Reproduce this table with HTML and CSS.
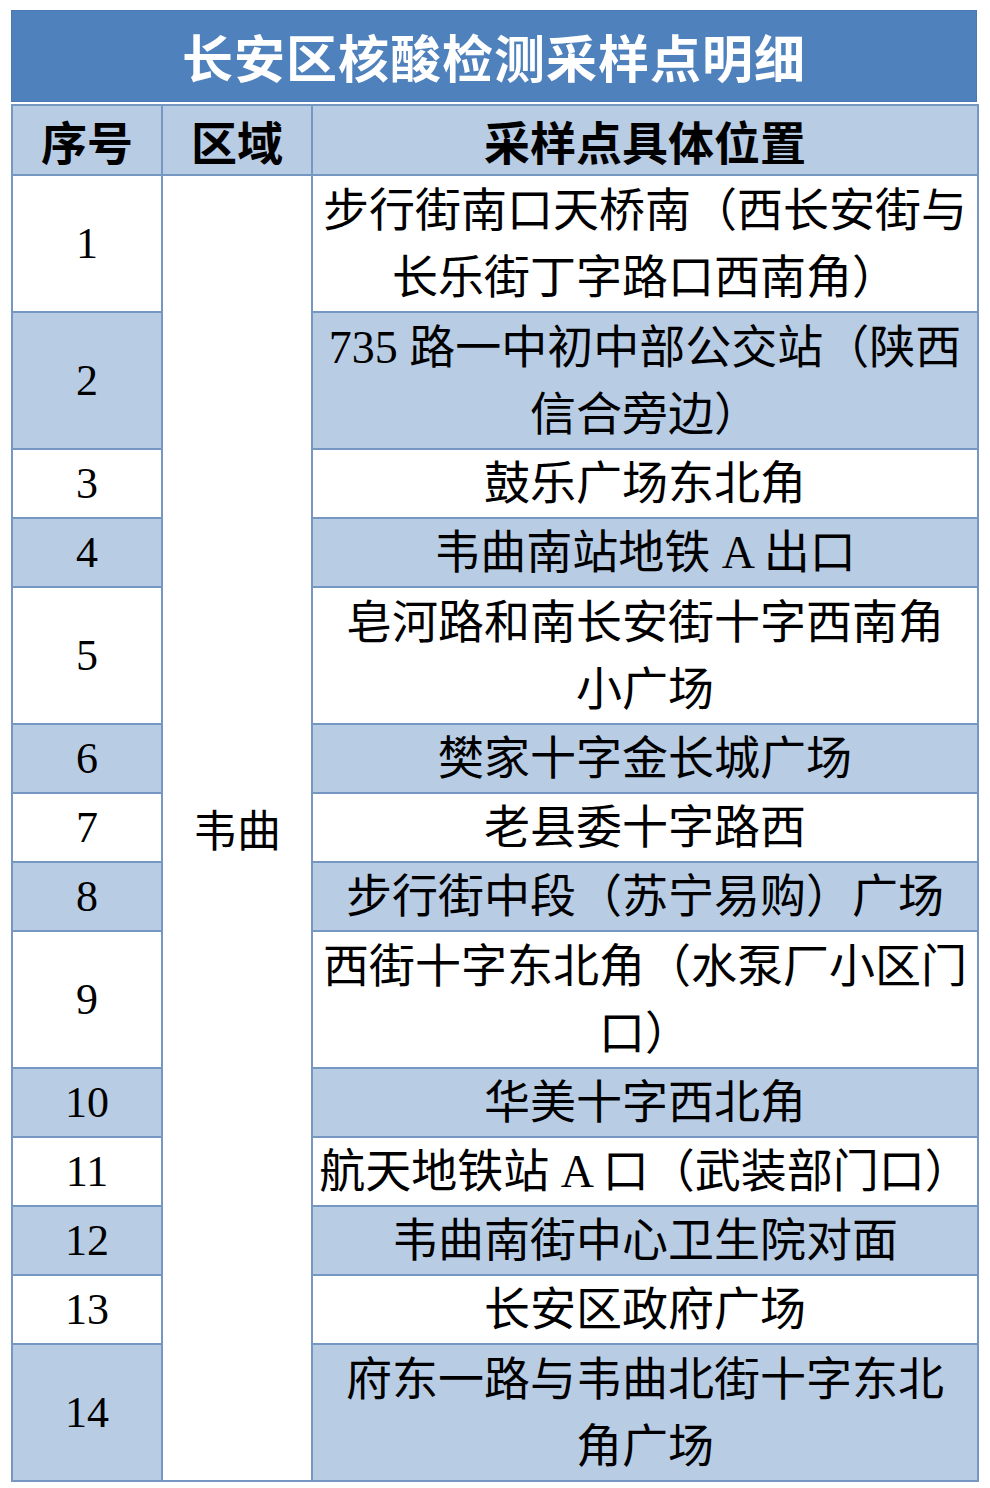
FILE: index.html
```html
<!DOCTYPE html>
<html lang="zh-CN">
<head>
<meta charset="utf-8">
<title>长安区核酸检测采样点明细</title>
<link rel="stylesheet" href="styles.css">
</head>
<body>
<div class="sheet">
  <div class="title">长安区核酸检测采样点明细</div>
  <table class="grid">
    <colgroup><col class="c1"><col class="c2"><col class="c3"></colgroup>
    <thead>
      <tr class="head"><th>序号</th><th>区域</th><th>采样点具体位置</th></tr>
    </thead>
    <tbody>
      <tr class="r2 w"><td class="num">1</td><td class="area" rowspan="14">韦曲</td><td class="loc">步行街南口天桥南（西长安街与<br>长乐街丁字路口西南角）</td></tr>
      <tr class="r2 b"><td class="num">2</td><td class="loc">735 路一中初中部公交站（陕西<br>信合旁边）</td></tr>
      <tr class="r1 w"><td class="num">3</td><td class="loc">鼓乐广场东北角</td></tr>
      <tr class="r1 b"><td class="num">4</td><td class="loc">韦曲南站地铁 A 出口</td></tr>
      <tr class="r2 w"><td class="num">5</td><td class="loc">皂河路和南长安街十字西南角<br>小广场</td></tr>
      <tr class="r1 b"><td class="num">6</td><td class="loc">樊家十字金长城广场</td></tr>
      <tr class="r1 w"><td class="num">7</td><td class="loc">老县委十字路西</td></tr>
      <tr class="r1 b"><td class="num">8</td><td class="loc">步行街中段（苏宁易购）广场</td></tr>
      <tr class="r2 w"><td class="num">9</td><td class="loc">西街十字东北角（水泵厂小区门<br>口）</td></tr>
      <tr class="r1 b"><td class="num">10</td><td class="loc">华美十字西北角</td></tr>
      <tr class="r1 w"><td class="num">11</td><td class="loc">航天地铁站 A 口（武装部门口）</td></tr>
      <tr class="r1 b"><td class="num">12</td><td class="loc">韦曲南街中心卫生院对面</td></tr>
      <tr class="r1 w"><td class="num">13</td><td class="loc">长安区政府广场</td></tr>
      <tr class="r2 b"><td class="num">14</td><td class="loc">府东一路与韦曲北街十字东北<br>角广场</td></tr>
    </tbody>
  </table>
</div>
</body>
</html>
```

FILE: styles.css
```css
html, body {
  margin: 0;
  padding: 0;
  background: #ffffff;
}
.sheet {
  padding: 10px 0 0 11px;
  width: 966px;
}
.title {
  height: 92px;
  background: #4f81bd;
  color: #ffffff;
  font-family: "Noto Sans CJK SC", sans-serif;
  font-weight: 700;
  font-size: 51px;
  line-height: 92px;
  text-align: center;
  letter-spacing: 1px;
  box-shadow: inset 0 0 0 1px #4a78b0;
}
.grid {
  margin-top: 2px;
  width: 966px;
  border-collapse: collapse;
  table-layout: fixed;
  font-family: "Liberation Serif", "Noto Sans CJK SC", serif;
  color: #000000;
}
.c1 { width: 150px; }
.c2 { width: 150px; }
.c3 { width: 666px; }
.grid th, .grid td {
  border: 2px solid #7797c3;
  padding: 0;
  text-align: center;
  vertical-align: middle;
}
.head th {
  height: 68px;
  background: #b8cce4;
  font-family: "Noto Sans CJK SC", sans-serif;
  font-weight: 700;
  font-size: 46px;
  line-height: 60px;
}
.r1 td { height: 67px; }
.r2 td { height: 135px; }
.b td { background: #b8cce4; }
.w td { background: #ffffff; }
.grid td.area {
  background: #ffffff;
  font-family: "Noto Sans CJK SC", sans-serif;
  font-size: 44px;
}
.num {
  font-size: 44px;
}
.loc {
  font-size: 46px;
  line-height: 67px;
  white-space: nowrap;
}
```
